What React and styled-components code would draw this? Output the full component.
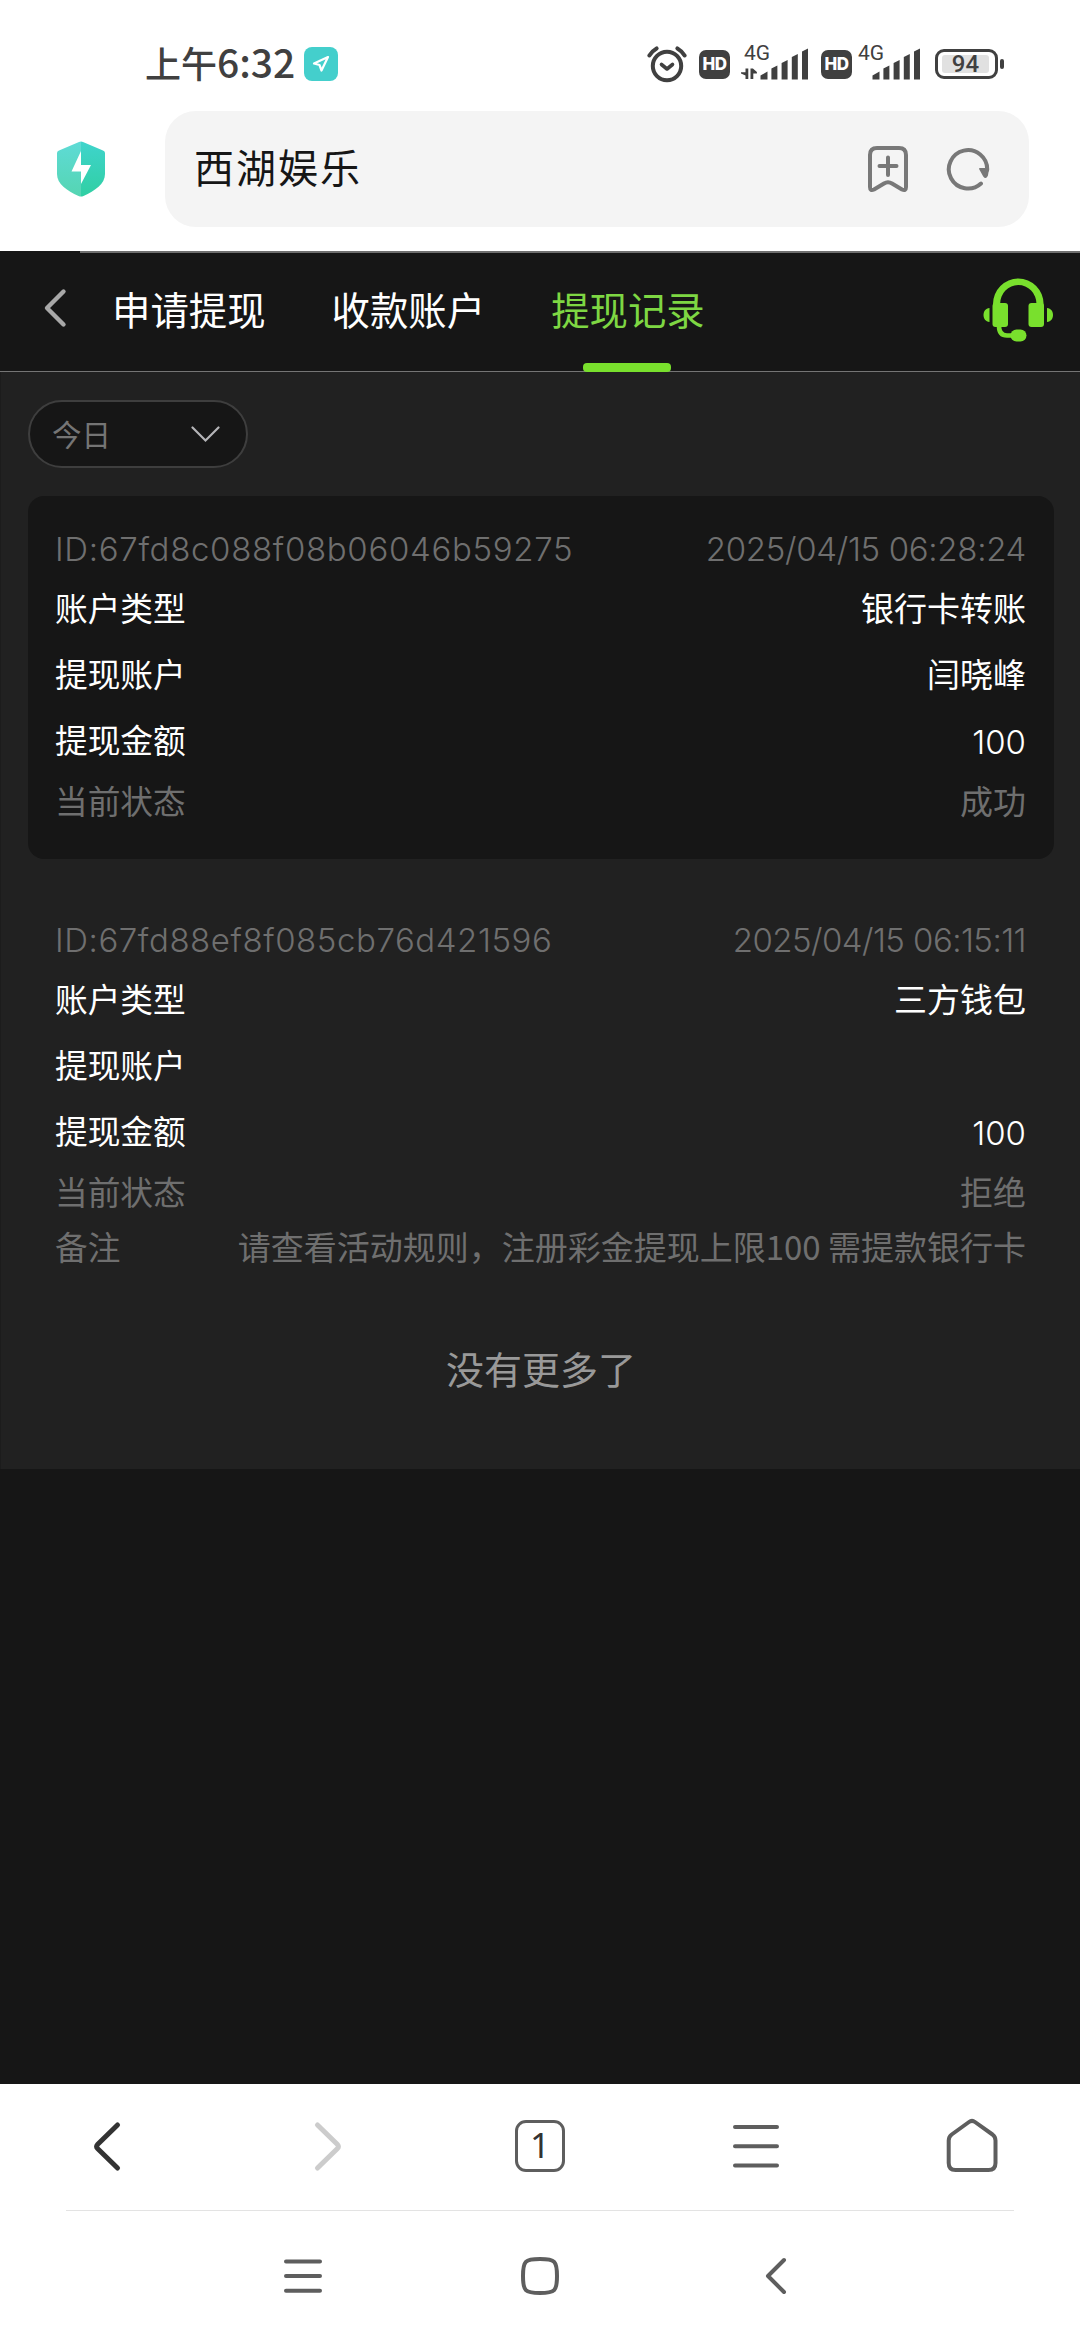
import styled, { createGlobalStyle } from 'styled-components';

const tabs = ['申请提现', '收款账户', '提现记录'];

const records = [
  {
    id: '67fd8c088f08b06046b59275',
    time: '2025/04/15 06:28:24',
    type: '银行卡转账',
    account: '闫晓峰',
    amount: '100',
    status: '成功',
    idSpace: '0.67px',
    timeSpace: '-0.32px',
  },
  {
    id: '67fd88ef8f085cb76d421596',
    time: '2025/04/15 06:15:11',
    type: '三方钱包',
    account: '',
    amount: '100',
    status: '拒绝',
    note: '请查看活动规则，注册彩金提现上限100 需提款银行卡',
    idSpace: '0.56px',
    timeSpace: '-0.56px',
  },
];

export default function App() {
  return (
    <>
      <GlobalStyle />
      <Screen>
        <StatusBar />
        <AddressBar />
        <Page>
          <Progress />
          <Header />
          <Content>
            <DateSelect>
              <span>今日</span>
              <svg width='30' height='18' viewBox='0 0 30 18' fill='none'>
                <path d='M1.5 2.5 L14.5 15.5 L27.5 2.5' stroke='#b5b5b8' strokeWidth='2.2' strokeLinecap='round' />
              </svg>
            </DateSelect>
            {records.map((record, i) => (
              <Record key={record.id} record={record} dark={i % 2 === 0} />
            ))}
            <NoMore>没有更多了</NoMore>
          </Content>
        </Page>
        <Toolbar />
        <SystemNav />
      </Screen>
    </>
  );
}

function Signal({ arrows }) {
  return (
    <SignalBox $arrows={arrows}>
      <span>4G</span>
      <svg width='68' height='32' viewBox='0 0 68 32' fill='#404040'>
        {arrows && (
          <path d='M4.5 20.5 h2.8 v10.5 h-2.8 v-3.4 L0 25.6 v-1.4 h4.5 z M9.5 31 v-10.5 h2.4 l4 3.4 v1.6 h-3.6 V31 z' />
        )}
        <path d='M19.5 31.5 V27.5 L26.5 23.5 V31.5 Z' />
        <path d='M30.4 31.5 V20.5 L36.4 17.5 V31.5 Z' />
        <path d='M40.6 31.5 V15 L46.6 12 V31.5 Z' />
        <path d='M50.8 31.5 V9 L56.8 6 V31.5 Z' />
        <path d='M61 31.5 V3.5 L67 0.5 V31.5 Z' />
      </svg>
    </SignalBox>
  );
}

function StatusBar() {
  return (
    <StatusRow>
      <Clock>
        上午<b>6:32</b>
      </Clock>
      <LocationBadge>
        <svg width='18' height='18' viewBox='0 0 18 18' fill='none'>
          <path d='M16 2 L2 8.5 L7.5 10 L9.5 15.5 Z' stroke='#fff' strokeWidth='2.2' strokeLinejoin='round' />
        </svg>
      </LocationBadge>
      <StatusIcons>
        <svg width='40' height='38' viewBox='0 0 40 38' fill='none' stroke='#404040' strokeLinecap='round'>
          <circle cx='20' cy='21' r='14.2' strokeWidth='4' />
          <path d='M14.5 19.5 L20 24 L25.5 19.5' strokeWidth='3.6' strokeLinejoin='round' />
          <path d='M2.4 10.5 Q5 6 9.6 3.4 M37.6 10.5 Q35 6 30.4 3.4' strokeWidth='4' />
        </svg>
        <HdBadge>HD</HdBadge>
        <Signal arrows />
        <HdBadge>HD</HdBadge>
        <Signal />
        <Battery>
          <BatteryBody>
            <span>94</span>
          </BatteryBody>
          <BatteryTip />
        </Battery>
      </StatusIcons>
    </StatusRow>
  );
}

function AddressBar() {
  return (
    <AddressRow>
      <svg width='48' height='56' viewBox='0 0 48 56'>
        <defs>
          <linearGradient id='shieldLeft' x1='0' y1='0' x2='0' y2='1'>
            <stop offset='0' stopColor='#5edbd6' />
            <stop offset='1' stopColor='#55d5b2' />
          </linearGradient>
          <linearGradient id='shieldRight' x1='0' y1='0' x2='0' y2='1'>
            <stop offset='0' stopColor='#3fd4cc' />
            <stop offset='1' stopColor='#30cfa3' />
          </linearGradient>
        </defs>
        <path d='M24 0.5 Q23 0.5 22 1 L2 9.4 Q0 10.2 0 12 V33 C0 43 10 49.5 21.5 55 Q23 55.6 24 55.6 Z' fill='url(#shieldLeft)' />
        <path d='M24 0.5 Q25 0.5 26 1 L46 9.4 Q48 10.2 48 12 V33 C48 43 38 49.5 26.5 55 Q25 55.6 24 55.6 Z' fill='url(#shieldRight)' />
        <path d='M24 10 L14.5 30.5 H24 V43 L34 24 H24 Z' fill='#fff' />
      </svg>
      <AddressField>
        <AddressText>西湖娱乐</AddressText>
        <svg width='42' height='48' viewBox='0 0 42 48' fill='none' stroke='#787878' strokeWidth='4' strokeLinecap='round' strokeLinejoin='round'>
          <path d='M3 10 Q3 3 10 3 H32 Q39 3 39 10 V42 Q39 46.5 35 44.5 L25 38.5 Q21 36 17 38.5 L7 44.5 Q3 46.5 3 42 Z' />
          <path d='M21 12.5 V30 M12.5 21 H29.5' />
        </svg>
        <svg width='44' height='46' viewBox='0 0 44 46' fill='none'>
          <path d='M35 37.5 A19.2 19.2 0 1 1 41.2 24' stroke='#787878' strokeWidth='4' strokeLinecap='round' />
          <path d='M34 22.8 H42.2 L41 29.5 Q39.8 32.5 38 30 Z' fill='#787878' stroke='#787878' strokeWidth='1.8' strokeLinejoin='round' />
        </svg>
      </AddressField>
    </AddressRow>
  );
}

function Header() {
  return (
    <HeaderRow>
      <svg width='26' height='42' viewBox='0 0 26 42' fill='none'>
        <path d='M21.5 4.5 L5 21 L21.5 37.5' stroke='#a8a8a8' strokeWidth='4.4' strokeLinecap='round' strokeLinejoin='round' />
      </svg>
      <Tabs>
        {tabs.map((tab) => (
          <Tab key={tab} $active={tab === '提现记录'}>
            {tab}
          </Tab>
        ))}
      </Tabs>
      <svg width='72' height='66' viewBox='0 0 72 66' fill='#79e02d'>
        <path d='M11 44 V27 A25.3 25.5 0 0 1 61.6 27 V44 H54.5 V27 A18.2 19 0 0 0 18.1 27 V44 Z' />
        <rect x='10.5' y='26' width='15.5' height='24' rx='3' />
        <rect x='46.5' y='26' width='15.5' height='24' rx='3' />
        <path d='M7.5 31 V45 C-0.5 44.5 -0.5 31.5 7.5 31 Z M65 31 V45 C73 44.5 73 31.5 65 31 Z' />
        <path d='M17 49 Q17 58.5 25 58.5 H34' fill='none' stroke='#79e02d' strokeWidth='4.6' />
        <rect x='28.5' y='52.5' width='16' height='12' rx='6' />
      </svg>
    </HeaderRow>
  );
}

function Record({ record, dark }) {
  return (
    <Card $dark={dark}>
      <Row $muted>
        <Latin $space={record.idSpace}>ID:{record.id}</Latin>
        <Latin $space={record.timeSpace}>{record.time}</Latin>
      </Row>
      <Row>
        <Label>账户类型</Label>
        <Value>{record.type}</Value>
      </Row>
      <Row>
        <Label>提现账户</Label>
        <Value>{record.account}</Value>
      </Row>
      <Row>
        <Label>提现金额</Label>
        <Latin>{record.amount}</Latin>
      </Row>
      <Row $muted>
        <Label>当前状态</Label>
        <Value>{record.status}</Value>
      </Row>
      {record.note && (
        <Row $muted>
          <Label>备注</Label>
          <Value>{record.note}</Value>
        </Row>
      )}
    </Card>
  );
}

function Toolbar() {
  return (
    <ToolbarRow>
      <ToolIcon $color='#333' $width={5}>
        <path d='M39.5 8 L19.5 27.5 Q17.8 29.5 19.5 31.5 L39.5 51' />
      </ToolIcon>
      <ToolIcon $color='#ccc' $width={5}>
        <path d='M23.5 8 L43.5 27.5 Q45.2 29.5 43.5 31.5 L23.5 51' />
      </ToolIcon>
      <TabCount>1</TabCount>
      <ToolIcon>
        <path d='M9 10 H51 M9 29.3 H51 M9 48.5 H51' />
      </ToolIcon>
      <ToolIcon>
        <path d='M27 5 Q30 2.8 33 5 L50.5 17.5 Q53.5 19.8 53.5 23.5 V46 Q53.5 53 46.5 53 H13.5 Q6.7 53 6.7 46 V23.5 Q6.7 19.8 9.7 17.5 Z' />
      </ToolIcon>
    </ToolbarRow>
  );
}

function SystemNav() {
  return (
    <SystemRow>
      <ToolIcon>
        <path d='M13 15.5 H47 M13 30 H47 M13 44.7 H47' />
      </ToolIcon>
      <ToolIcon>
        <path d='M13 30 C13 15 15 13 30 13 S47 15 47 30 S45 47 30 47 S13 45 13 30 Z' />
      </ToolIcon>
      <ToolIcon>
        <path d='M37 14 L21 30 L37 46' />
      </ToolIcon>
    </SystemRow>
  );
}

const GlobalStyle = createGlobalStyle`
  * {
    box-sizing: border-box;
  }
  body {
    margin: 0;
    background: #fff;
    font-family: 'Noto Sans CJK SC', sans-serif;
  }
  svg {
    display: block;
    flex-shrink: 0;
  }
`;

const Screen = styled.div`
  display: flex;
  flex-direction: column;
  width: 1080px;
  height: 2340px;
  overflow: hidden;
  background: #fff;
`;

const StatusRow = styled.div`
  display: flex;
  align-items: center;
  height: 111px;
  padding: 17px 76px 0 145px;
  color: #404040;
`;

const Clock = styled.div`
  width: 159px;
  margin-top: -6px;
  font-size: 36px;
  font-weight: 500;
  line-height: 40px;
  white-space: nowrap;

  b {
    font-size: 39px;
    font-weight: 500;
  }
`;

const LocationBadge = styled.div`
  display: flex;
  align-items: center;
  justify-content: center;
  width: 34px;
  height: 34px;
  border-radius: 8px;
  background: #44cfcc;
`;

const StatusIcons = styled.div`
  display: flex;
  align-items: center;
  margin-left: auto;
`;

const HdBadge = styled.div`
  width: 31px;
  height: 29px;
  margin-left: 12px;
  border-radius: 7px;
  background: #404040;
  color: #fff;
  font: 800 17px/29px Inter, sans-serif;
  letter-spacing: -0.5px;
  text-align: center;
`;

const SignalBox = styled.div`
  position: relative;
  margin-left: ${(props) => (props.$arrows ? '11px' : '1px')};
  color: #404040;

  span {
    position: absolute;
    left: ${(props) => (props.$arrows ? '3px' : '5px')};
    top: -5px;
    font: 400 21px/20px Roboto, sans-serif;
  }
`;

const Battery = styled.div`
  display: flex;
  align-items: center;
  margin-left: 14px;
`;

const BatteryBody = styled.div`
  width: 63px;
  height: 30px;
  padding: 3px 6px 3px 4px;
  border: 3px solid #404040;
  border-radius: 9px;

  span {
    display: block;
    height: 18px;
    border-radius: 3px;
    background: #e1e1e1;
    font: 500 24px/19px Roboto, sans-serif;
    text-align: center;
  }
`;

const BatteryTip = styled.div`
  width: 4px;
  height: 10px;
  margin-left: 2px;
  border-radius: 2px;
  background: #404040;
`;

const AddressRow = styled.div`
  display: flex;
  align-items: center;
  gap: 60px;
  height: 116px;
  margin-bottom: 24px;
  padding: 0 51px 0 57px;
`;

const AddressField = styled.div`
  display: flex;
  flex: 1;
  align-items: center;
  gap: 37px;
  height: 116px;
  padding: 0 39px 0 29px;
  border-radius: 31px;
  background: #f4f4f4;
`;

const AddressText = styled.div`
  flex: 1;
  margin-top: -6px;
  color: #161616;
  font-size: 40px;
  letter-spacing: 2px;
`;

const Page = styled.div`
  height: 1833px;
  background: #161616;
`;

const Progress = styled.div`
  height: 2px;
  margin-left: 80px;
  background: #707070;
`;

const HeaderRow = styled.div`
  display: flex;
  align-items: center;
  height: 119px;
  padding: 0 26px 0 42px;
  border-bottom: 1px solid #757575;

  > svg:first-child {
    margin-top: -8px;
  }

  > svg:last-child {
    margin: -5px 0 0 auto;
  }
`;

const Tabs = styled.div`
  display: flex;
  gap: 66px;
  height: 100%;
  margin-left: 44px;
`;

const Tab = styled.div`
  position: relative;
  color: ${(props) => (props.$active ? '#7ed743' : '#fff')};
  font-size: 38.4px;
  line-height: 110px;

  &::after {
    content: '';
    display: ${(props) => (props.$active ? 'block' : 'none')};
    position: absolute;
    left: 32px;
    bottom: -1px;
    width: 88px;
    height: 9px;
    border-radius: 4px;
    background: #79e02d;
  }
`;

const Content = styled.div`
  height: 1097px;
  padding: 28px 26px 0 27px;
  border-left: 1px solid #1c1c1c;
  background: #212121;
`;

const DateSelect = styled.div`
  display: flex;
  align-items: center;
  justify-content: space-between;
  width: 220px;
  height: 68px;
  margin-bottom: 28px;
  padding: 0 25px 0 22px;
  border: 2px solid #3e3e3e;
  border-radius: 34px;
  background: #161616;
  color: #757575;
  font-size: 29.5px;

  span {
    margin-top: -3px;
  }
`;

const Card = styled.div`
  margin-bottom: 28px;
  padding: 25px 28px 30px 27px;
  border-radius: 16px;
  background: ${(props) => (props.$dark ? '#161616' : 'transparent')};
`;

const Row = styled.div`
  display: flex;
  align-items: center;
  justify-content: space-between;
  height: ${(props) => (props.$muted ? 55 : 66)}px;
  color: ${(props) => (props.$muted ? '#6f6f6f' : '#fff')};
  font-size: 33px;
  line-height: 48px;
  white-space: nowrap;
`;

const Label = styled.span`
  margin-top: -4px;
  font-size: 32.7px;
`;

const Value = styled.span`
  margin-top: -4px;
`;

const Latin = styled.span`
  margin-top: 1px;
  font-family: Inter, sans-serif;
  font-size: 33px;
  font-weight: ${(props) => (props.$space ? 300 : 350)};
  letter-spacing: ${(props) => props.$space || '0'};
`;

const NoMore = styled.div`
  margin-top: 35px;
  color: #999;
  font-size: 38px;
  line-height: 56px;
  text-align: center;
`;

const ToolbarRow = styled.div`
  display: grid;
  grid-template-columns: repeat(5, 1fr);
  align-items: center;
  justify-items: center;
  height: 126px;
`;

const ToolIcon = styled.svg.attrs({ width: 60, height: 60, viewBox: '0 0 60 60' })`
  fill: none;
  stroke: ${(props) => props.$color || '#5e5e5e'};
  stroke-width: ${(props) => props.$width || 4};
  stroke-linecap: round;
  stroke-linejoin: round;
`;

const TabCount = styled.div`
  width: 50px;
  height: 52px;
  margin-top: -2px;
  border: 3.5px solid #5e5e5e;
  border-radius: 11px;
  color: #333;
  font: 400 35px/44px 'Noto Sans', sans-serif;
  text-align: center;
`;

const SystemRow = styled.div`
  display: grid;
  grid-template-columns: repeat(3, 1fr);
  align-items: center;
  justify-items: center;
  height: 130px;
  margin: 0 66px;
  padding: 0 118px;
  border-top: 1px solid #e3e3e3;
`;
